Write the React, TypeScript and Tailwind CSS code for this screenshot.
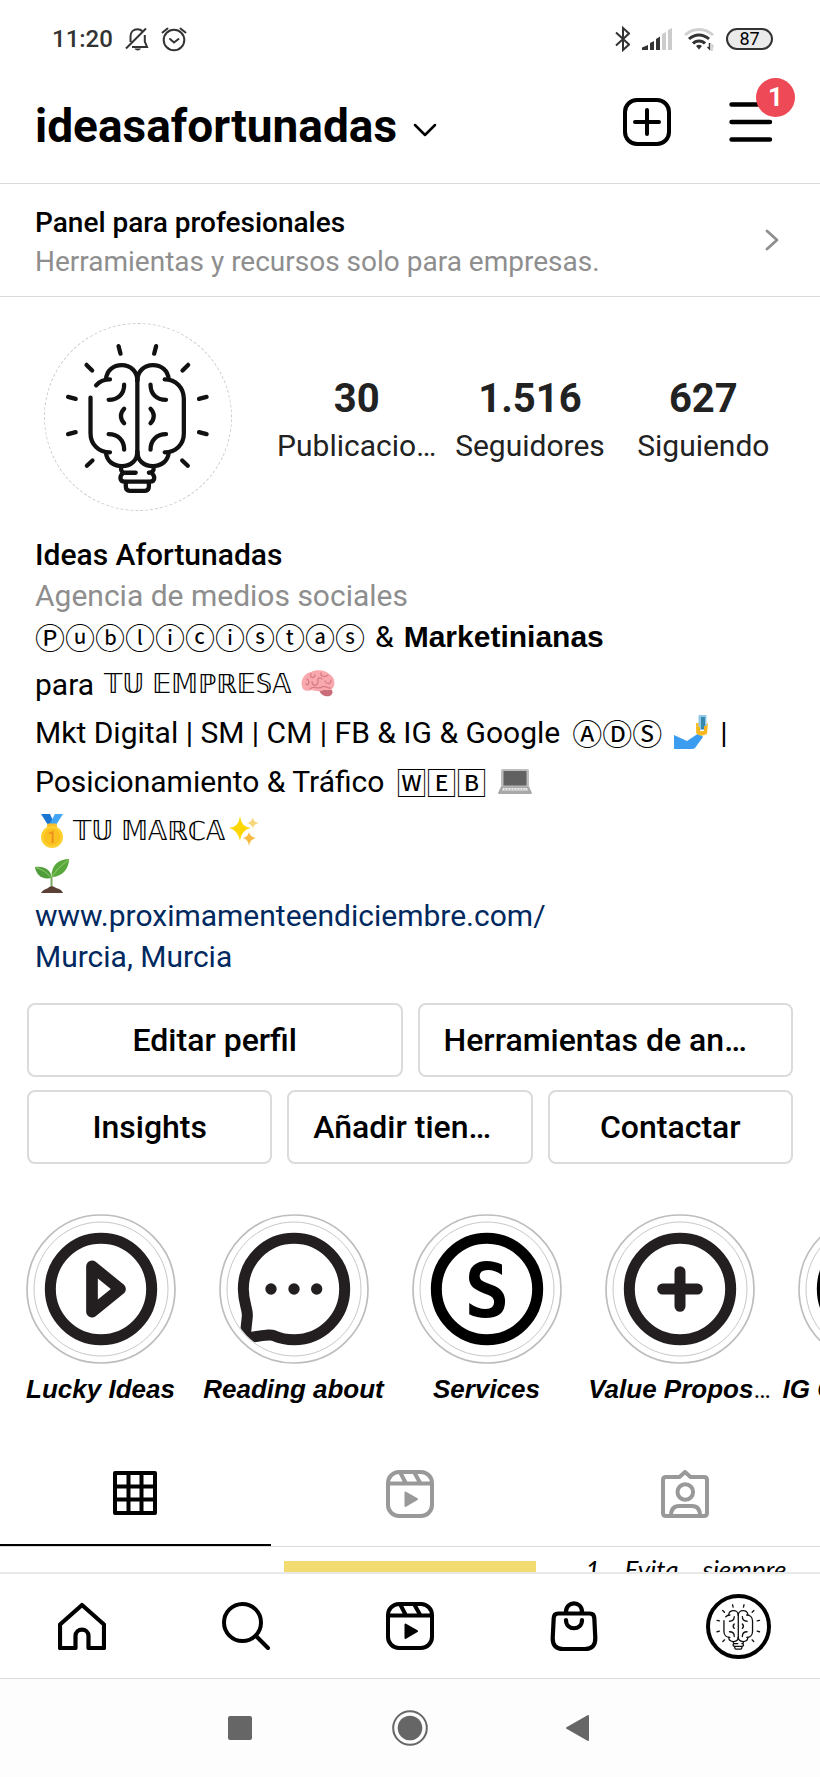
import React from "react";

function BrainBulb({ className }: { className: string }) {
  const half = (
    <>
      <path d="M413 240C413 212 392 194 366 194C340 194 320 210 318 237" />
      <path d="M318 460C320 484 340 500 366 500C394 500 413 482 413 456" />
      <path d="M373 253C373 281 355 299 326 299" />
      <path d="M373 326C360 339 360 357 373 370" />
      <path d="M326 403C355 403 373 422 373 450" />
      <path d="M356 136L362 159M259 193L276 210M203 290L226 296M203 403L226 397M260 499L277 483" />
    </>
  );
  return (
    <svg viewBox="133 69 564 564" className={className} fill="none" stroke="#111" strokeWidth="13" strokeLinecap="round" strokeLinejoin="round" aria-hidden="true">
      <path d="M413 220V475" />
      {half}
      <g transform="translate(826 0) scale(-1 1)">{half}</g>
      <path d="M330 237C312 237 298 243 288 255M271 292V400C271 434 296 458 330 458" />
      <path d="M496 237C530 237 554 262 554 296V400C554 434 530 458 496 458" />
      <path d="M364 502C362 512 366 520 376 520H408M462 502C464 512 460 520 448 520" />
      <path d="M368 522C358 532 360 547 374 547H452C466 547 468 532 458 522" />
      <path d="M378 548V562Q378 575 390 575H436Q448 575 448 562V548" />
    </svg>
  );
}

function ReelsIcon({ className }: { className: string }) {
  return (
    <svg viewBox="0 0 48 48" className={className} fill="none" stroke="currentColor" strokeWidth="4" strokeLinejoin="round" aria-hidden="true">
      <rect x="2" y="2" width="44" height="44" rx="11" />
      <path d="M2 13.5H46M14 2L20 13.5M28 2L34.5 13.5" />
      <path d="M19.5 22.5V36L31 29.2Z" fill="currentColor" strokeWidth="2" />
    </svg>
  );
}

function StatusBar() {
  return (
    <div className="flex h-[78px] items-center justify-between pl-[52px] pr-[47px] text-[#333]">
      <div className="flex items-center gap-3">
        <span className="text-[24px] font-medium">11:20</span>
        <svg viewBox="0 0 24 24" className="h-6 w-6" fill="none" stroke="currentColor" strokeWidth="2" aria-hidden="true">
          <path d="M5.5 15V9.500C5.500 5 8.500 2.200 12.500 2.200C14.500 2.200 16 2.800 17.500 4.300M19.800 8V14.500L22 20H7M1 21.500L21 1.500" />
          <path d="M9.500 21.500H16C15 24 10.500 24 9.500 21.500Z" fill="currentColor" stroke="none" />
        </svg>
        <svg viewBox="0 0 26 26" className="h-[26px] w-[26px]" fill="none" stroke="currentColor" strokeWidth="2" strokeLinecap="round" aria-hidden="true">
          <circle cx="13" cy="14" r="10.300" />
          <path d="M9 13L13 16.500L17.500 13M1.500 6.500L6.500 2.500M24.500 6.500L19.500 2.500" />
        </svg>
      </div>
      <div className="flex items-center gap-3">
        <svg viewBox="-3 0 16 26" className="h-[26px] w-4" fill="none" stroke="currentColor" strokeWidth="2" aria-hidden="true">
          <path d="M-1 6.500L12 18.500L6 24V2L12 7.500L-1 19.500" />
        </svg>
        <svg viewBox="0 0 30 22" className="h-[22px] w-[30px]" aria-hidden="true">
          <path d="M0 22V19.500L6 17V22ZM8 22V15L12 13V22ZM14 22V11L18 8.500V22Z" fill="#333" />
          <path d="M20 22V6L24 4V22ZM26 22V2L30 0V22Z" fill="#ccc" />
        </svg>
        <svg viewBox="0 0 30 24" className="h-6 w-[30px]" fill="none" strokeWidth="3" aria-hidden="true">
          <path d="M1 8C9 .5 21 .5 29 8" stroke="#d0d0d0" />
          <path d="M5 12C11 6.500 19 6.500 25 12M9 16.500C12 13 18 13 21 16.500" stroke="#333" />
          <path d="M12 19Q15 16.500 18 19L15 22.500Z" fill="#333" />
          <path d="M25.500 16V22L23.500 20" stroke="#333" strokeWidth="1.500" />
          <path d="M28 24V18L29.500 20" stroke="#ccc" strokeWidth="1.500" />
        </svg>
        <span className="flex h-[22px] w-[47px] items-center justify-center rounded-full border-2 border-[#333] bg-[#eaeaea] text-[18px] leading-none text-black">
          87
        </span>
      </div>
    </div>
  );
}

function Header() {
  return (
    <header className="flex h-[106px] items-start justify-between border-b border-[#dbdbdb] pl-[35px] pr-[46px]">
      <button className="flex items-center gap-4 pt-5">
        <h1 className="text-[46px] font-bold leading-[56px]">ideasafortunadas</h1>
        <svg viewBox="0 0 24 14" className="mt-2 h-[14px] w-6" fill="none" stroke="currentColor" strokeWidth="2.500" strokeLinecap="round" strokeLinejoin="round" aria-hidden="true">
          <path d="M2 2L12 12L22 2" />
        </svg>
      </button>
      <div className="flex gap-[57px] pt-5">
        <button aria-label="Crear">
          <svg viewBox="0 0 48 48" className="h-12 w-12" fill="none" stroke="currentColor" strokeWidth="4" strokeLinecap="round" aria-hidden="true">
            <rect x="2" y="2" width="44" height="44" rx="12" />
            <path d="M24 12V36M12 24H36" />
          </svg>
        </button>
        <button aria-label="Menú" className="relative">
          <svg viewBox="0 0 46 48" className="h-12 w-[46px]" fill="none" stroke="currentColor" strokeWidth="4.400" strokeLinecap="round" aria-hidden="true">
            <path d="M3.500 6.500H42M3.500 24H42M3.500 41.500H42" />
          </svg>
          <span className="absolute -right-[21px] -top-5 flex size-[39px] items-center justify-center rounded-full bg-[#ed4956] text-[26px] font-bold text-white">
            1
          </span>
        </button>
      </div>
    </header>
  );
}

function Stat({ value, label }: { value: string; label: string }) {
  return (
    <div className="flex flex-1 flex-col items-center">
      <span className="text-[40px] font-bold leading-[48px] text-[#222]">{value}</span>
      <span className="whitespace-nowrap text-[30px] leading-[46px] text-[#222]">{label}</span>
    </div>
  );
}

const circled = "font-['Noto_Sans_CJK_JP',sans-serif]";
const outlined = "font-['DejaVu_Sans',sans-serif] text-[26px]";

function BrainEmoji() {
  return (
    <svg viewBox="0 0 34 28" className="h-7 w-[34px]" aria-hidden="true">
      <path d="M18 20C20 27 29 28 31 24C33 20 29 18 25 18Z" fill="#c96e78" />
      <path d="M1 16C-1 10 4 3 10 2C15-1 25 0 28 4C33 6 35 13 32 18C30 21 26 20 23 20C18 22 14 21 11 20C5 22 1 20 1 16Z" fill="#f9a8ad" />
      <path d="M5 14C8 17 9 11 6 9M10 4C8 8 14 9 14 5M11 12C12 17 17 16 17 11C16 8 19 7 21 9M20 3C19 6 24 8 27 5M24 11C26 15 30 14 30 10M9 19C12 15 17 20 21 17C23 15 26 18 29 18" fill="none" stroke="#d77c86" strokeWidth="1.300" strokeLinecap="round" />
    </svg>
  );
}

function SelfieEmoji() {
  return (
    <svg viewBox="0 0 34 34" className="h-[34px] w-[34px]" aria-hidden="true">
      <path d="M0 20L13 26L25 18L29 22L21 33Q20 34 18 34H0Z" fill="#3c9df0" />
      <path d="M22 8V18Q26 23 33 19L34 8L31 10V16H26V8Z" fill="#fbc02d" />
      <rect x="24.500" y="0" width="8" height="15" rx="1" fill="#8fc7e8" />
      <rect x="27" y="2" width="4" height="12" fill="#3887ad" />
      <path d="M23 17Q28 22 33 17V11H30V17H26V12H23Z" fill="#f9b51e" />
    </svg>
  );
}

function LaptopEmoji() {
  return (
    <svg viewBox="0 0 34 25" className="h-[25px] w-[34px]" aria-hidden="true">
      <rect x="3" y="0" width="28" height="18" rx="1.500" fill="#bdbdbd" />
      <rect x="5.500" y="2" width="23" height="14.500" fill="#616161" />
      <path d="M3 17.500H31L34 24Q34 25 32.500 25H1.500Q0 25 0 24Z" fill="#a8a8a8" />
      <path d="M5 19H29L30 21.500H4Z" fill="#e8e8e8" />
      <path d="M6 20.200H28" stroke="#aaa" strokeWidth=".8" strokeDasharray="2 1" />
    </svg>
  );
}

function MedalEmoji() {
  return (
    <svg viewBox="0 0 34 34" className="h-[34px] w-[34px]" aria-hidden="true">
      <path d="M6 0H15L20 11H13Z" fill="#1976d2" />
      <path d="M28 0H20L14 11H21Z" fill="#42a5f5" />
      <rect x="12" y="9.500" width="10" height="4" rx="1.500" fill="#f9c02d" />
      <circle cx="17" cy="23" r="11" fill="#fdd02f" />
      <circle cx="17" cy="23" r="8.500" fill="#fbc11f" />
      <text x="17" y="29" textAnchor="middle" fontSize="16" fontWeight="500" fill="#ed8f1c">1</text>
    </svg>
  );
}

function SparklesEmoji() {
  return (
    <svg viewBox="0 0 30 32" className="h-8 w-[30px]" aria-hidden="true">
      <path d="M11 1Q12 12 22 13Q12 15 11 26Q9 15 0 13Q10 12 11 1Z" fill="#fdd600" />
      <path d="M20 17Q21 22 27 23Q21 24 20 31Q19 24 14 23Q19 22 20 17Z" fill="#f8b940" />
      <path d="M24 2Q24 7 30 8Q24 9 24 14Q23 9 18 8Q23 7 24 2Z" fill="#f8d77a" />
    </svg>
  );
}

function SeedlingEmoji() {
  return (
    <svg viewBox="0 0 34 34" className="h-[34px] w-[34px]" aria-hidden="true">
      <path d="M16.500 30V17" stroke="#7ba75a" strokeWidth="2" />
      <path d="M16.500 19C6 21 1 15 0 8C10 7 16 11 16.500 19Z" fill="#4f9d3a" />
      <path d="M16.500 18C16 6 24 0 34 0C34 10 27 18 16.500 18Z" fill="#58a83c" />
      <path d="M1 8.500Q10 11 16 18.500Q23 8 33 1" fill="none" stroke="#95cf72" />
      <path d="M6 34C8 30 13 30 14 28Q18 26 21 29C26 30 27 32 28 34Z" fill="#5b4037" />
    </svg>
  );
}

function Profile() {
  return (
    <section>
      <div className="flex items-start pl-11 pr-[30px] pt-[26px]">
        <div className="size-[188px] shrink-0 rounded-full border border-dashed border-[#ccc]">
          <BrainBulb className="size-full" />
        </div>
        <div className="ml-[38px] flex flex-1 pt-[52px]">
          <Stat value="30" label="Publicacio…" />
          <Stat value="1.516" label="Seguidores" />
          <Stat value="627" label="Siguiendo" />
        </div>
      </div>
      <div className="px-[35px] pt-[23px] text-[30px] leading-[41px]">
        <h2 className="font-medium">Ideas Afortunadas</h2>
        <p className="text-[#8e8e8e]">Agencia de medios sociales</p>
        <div className="flex h-11 items-start gap-[10px]">
          <span className={circled}>Ⓟⓤⓑⓛⓘⓒⓘⓢⓣⓐⓢ</span>
          <span>&amp;</span>
          <b className="font-['Liberation_Sans',Arial,sans-serif]">Marketinianas</b>
        </div>
        <div className="flex h-12 items-center gap-[10px]">
          <span>para</span>
          <span className={outlined}>𝕋𝕌 𝔼𝕄ℙℝ𝔼𝕊𝔸</span>
          <BrainEmoji />
        </div>
        <div className="flex h-12 items-center gap-3">
          <span>Mkt Digital | SM | CM | FB &amp; IG &amp; Google</span>
          <span className={circled}>ⒶⒹⓈ</span>
          <SelfieEmoji />
          <span>|</span>
        </div>
        <div className="flex h-[50px] items-center gap-3">
          <span>Posicionamiento &amp; Tráfico</span>
          <span className={circled}>🅆🄴🄱</span>
          <LaptopEmoji />
        </div>
        <div className="flex h-[50px] items-center gap-1">
          <MedalEmoji />
          <span className={outlined}>𝕋𝕌 𝕄𝔸ℝℂ𝔸</span>
          <SparklesEmoji />
        </div>
        <div className="flex h-[39px] items-center">
          <SeedlingEmoji />
        </div>
        <a href="#web" className="block text-[#00295f]">www.proximamenteendiciembre.com/</a>
        <a href="#lugar" className="block text-[#00295f]">Murcia, Murcia</a>
      </div>
    </section>
  );
}

function ActionButton({ cut = false, children }: { cut?: boolean; children: React.ReactNode }) {
  return (
    <button className={`h-[74px] whitespace-nowrap rounded-lg border-2 border-[#dbdbdb] text-[32px] font-medium ${cut ? "pl-6 text-left" : ""}`}>
      {children}
    </button>
  );
}

function Actions() {
  return (
    <section className="flex flex-col gap-[13px] px-[27px] pt-[26px]">
      <div className="grid grid-cols-2 gap-[15px]">
        <ActionButton>Editar perfil</ActionButton>
        <ActionButton cut>Herramientas de an…</ActionButton>
      </div>
      <div className="grid grid-cols-3 gap-[15px]">
        <ActionButton>Insights</ActionButton>
        <ActionButton cut>Añadir tien…</ActionButton>
        <ActionButton>Contactar</ActionButton>
      </div>
    </section>
  );
}

function Highlight({ label, ink, ring = true, more = false, cut = false, children }: {
  label: string;
  ink: string;
  ring?: boolean;
  more?: boolean;
  cut?: boolean;
  children?: React.ReactNode;
}) {
  return (
    <button className="flex w-[193px] shrink-0 flex-col items-center">
      <svg viewBox="-225 -225 450 450" className="size-[150px]" fill="none" stroke={ink} strokeWidth="33" aria-hidden="true">
        <circle r="222" stroke="#bdbdbd" strokeWidth="5" />
        <circle r="201" stroke="#c8c8c8" strokeWidth="3" />
        {ring && <circle r="152" />}
        {children}
      </svg>
      <span className={`mt-[9px] whitespace-nowrap font-['Liberation_Sans',Arial,sans-serif] text-[26px] font-bold italic leading-8 ${cut ? "w-[180px] text-left" : ""}`}>
        {label}
        {more && <span className="font-['Roboto',sans-serif] font-normal not-italic">…</span>}
      </span>
    </button>
  );
}

function Highlights() {
  return (
    <section className="flex overflow-hidden pl-1 pt-[50px]">
      <Highlight label="Lucky Ideas" ink="#231f20">
        <path d="M-27 -68L57 0L-27 68Z" strokeLinejoin="round" strokeWidth="35" />
      </Highlight>
      <Highlight label="Reading about" ink="#231f20" ring={false}>
        <clipPath id="story"><circle r="199" /></clipPath>
        <path clipPath="url(#story)" d="M-152 0A152 152 0 1 1 0 152C-22 152 -44 147 -60 140C-75 134 -95 141 -147 147L-140 82C-138 60 -152 42 -152 0Z" />
        <g fill="#231f20" stroke="none">
          <circle cx="-69" r="17" />
          <circle r="17" />
          <circle cx="68" r="17" />
        </g>
      </Highlight>
      <Highlight label="Services" ink="#000">
        <text y="84" textAnchor="middle" fill="#000" stroke="none" fontFamily="DejaVu Sans Mono" fontWeight="700" fontSize="226">S</text>
      </Highlight>
      <Highlight label="Value Propos" ink="#231f20" more>
        <path d="M0 -52V52M-52 0H52" strokeLinecap="round" />
      </Highlight>
      <Highlight label="IG C" ink="#000" cut />
    </section>
  );
}

function Tabs() {
  return (
    <nav className="mt-[37px] grid h-[105px] grid-cols-3 gap-1 border-b border-[#dbdbdb]">
      <button aria-label="Publicaciones" className="flex items-center justify-center border-b-2 border-black">
        <svg viewBox="0 0 44 44" className="size-11" fill="none" stroke="currentColor" strokeWidth="4" strokeLinejoin="round" aria-hidden="true">
          <path d="M2 2H42V42H2ZM15.500 2V42M28.500 2V42M2 15.500H42M2 28.500H42" />
        </svg>
      </button>
      <button aria-label="Reels" className="flex items-center justify-center text-[#999]">
        <ReelsIcon className="size-12" />
      </button>
      <button aria-label="Etiquetadas" className="flex items-center justify-center text-[#999]">
        <svg viewBox="0 0 48 48" className="size-12" fill="none" stroke="currentColor" strokeWidth="4" strokeLinejoin="round" aria-hidden="true">
          <path d="M5 7H18.500L24 2L29.500 7H43Q46 7 46 10V43Q46 46 43 46H5Q2 46 2 43V10Q2 7 5 7Z" />
          <circle cx="24.300" cy="22" r="7.800" />
          <path d="M10 46C10 39 13 36 18 36H31C36 36 39 39 39 46" />
        </svg>
      </button>
    </nav>
  );
}

function Posts() {
  return (
    <section className="grid h-[25px] grid-cols-3 gap-1 overflow-hidden">
      <div />
      <div className="px-[9px] pt-[14px]">
        <div className="h-[30px] bg-[#f2dc72]" />
      </div>
      <div className="flex gap-6 whitespace-nowrap pl-9 pt-[6px] font-['Lato',sans-serif] text-[26px] italic leading-8">
        <span>1</span>
        <span>Evita</span>
        <span>siempre</span>
      </div>
    </section>
  );
}

function BottomNav() {
  const cell = "flex items-center justify-center";
  return (
    <nav className="grid h-[107px] grid-cols-5 border-b border-t-2 border-b-[#dbdbdb] border-t-[#e8e8e8]">
      <button aria-label="Inicio" className={cell}>
        <svg viewBox="0 0 48 48" className="size-12" fill="none" stroke="currentColor" strokeWidth="4.200" strokeLinejoin="round" aria-hidden="true">
          <path d="M2 22.500L24 3L46 22.500V46H30.500V34C30.500 25.500 17.500 25.500 17.500 34V46H2Z" />
        </svg>
      </button>
      <button aria-label="Buscar" className={cell}>
        <svg viewBox="0 0 48 48" className="size-12" fill="none" stroke="currentColor" strokeWidth="4" strokeLinecap="round" aria-hidden="true">
          <circle cx="20.500" cy="20.500" r="18.500" />
          <path d="M34 34L46 46" />
        </svg>
      </button>
      <button aria-label="Reels" className={cell}>
        <ReelsIcon className="size-12" />
      </button>
      <button aria-label="Tienda" className={cell}>
        <svg viewBox="0 0 48 52" className="h-[52px] w-12" fill="none" stroke="currentColor" strokeWidth="4.200" strokeLinecap="round" strokeLinejoin="round" aria-hidden="true">
          <path d="M8 13.500H40Q44 13.500 44.300 18L45.300 38Q45.500 49 35 49H13Q2.500 49 2.700 38L3.700 18Q4 13.500 8 13.500Z" />
          <path d="M16 12C16 .5 32 .5 32 12M16 20C16 31 32 31 32 20" />
        </svg>
      </button>
      <button aria-label="Perfil" className={cell}>
        <span className="size-[65px] rounded-full border-4 border-black">
          <BrainBulb className="size-full" />
        </span>
      </button>
    </nav>
  );
}

function SystemNav() {
  return (
    <div className="flex min-h-[90px] flex-1 items-center justify-center bg-[#fdfdfd] text-[#666]">
      <button aria-label="Recientes" className="flex w-[170px] justify-center">
        <span className="size-6 rounded-[2px] bg-[#666]" />
      </button>
      <button aria-label="Pantalla de inicio" className="flex w-[170px] justify-center">
        <svg viewBox="0 0 36 36" className="size-9" aria-hidden="true">
          <circle cx="18" cy="18" r="16.800" fill="none" stroke="currentColor" strokeWidth="2" />
          <circle cx="18" cy="18" r="12.300" fill="currentColor" />
        </svg>
      </button>
      <button aria-label="Atrás" className="flex w-[170px] justify-center">
        <svg viewBox="0 0 30 28" className="h-7 w-[30px]" aria-hidden="true">
          <path d="M2 14L23 2V26Z" fill="currentColor" stroke="currentColor" strokeWidth="2" strokeLinejoin="round" />
        </svg>
      </button>
    </div>
  );
}

export default function App() {
  return (
    <div className="flex min-h-screen flex-col overflow-x-hidden bg-white font-['Roboto',sans-serif] text-black">
      <StatusBar />
      <Header />
      <a href="#panel" className="flex h-[113px] items-center justify-between border-b border-[#dbdbdb] pl-[35px] pr-[41px]">
        <span className="pt-1 text-[28px] leading-[39px]">
          <span className="block font-medium">Panel para profesionales</span>
          <span className="block text-[#8e8e8e]">Herramientas y recursos solo para empresas.</span>
        </span>
        <svg viewBox="0 0 14 22" className="h-[22px] w-[14px]" fill="none" stroke="#8e8e8e" strokeWidth="2.800" strokeLinecap="round" strokeLinejoin="round" aria-hidden="true">
          <path d="M2 2L12 11L2 20" />
        </svg>
      </a>
      <Profile />
      <Actions />
      <Highlights />
      <Tabs />
      <Posts />
      <BottomNav />
      <SystemNav />
    </div>
  );
}
